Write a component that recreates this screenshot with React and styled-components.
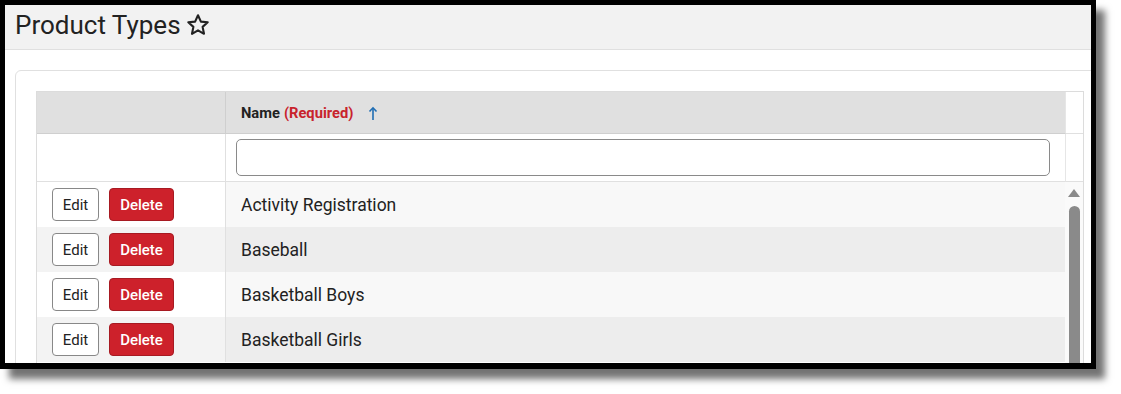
import React from 'react'
import styled, { createGlobalStyle } from 'styled-components'

const GlobalStyle = createGlobalStyle`
  body {
    margin: 0;
    background: #fff;
    font-family: Roboto, "Liberation Sans", sans-serif;
  }
`

const rows = ['Activity Registration', 'Baseball', 'Basketball Boys', 'Basketball Girls']

function Star() {
  return (
    <svg width="24" height="24" viewBox="0 0 24 24" fill="none" stroke="#222" strokeWidth="2.1" strokeLinejoin="round">
      <polygon points="12,2.3 14.9,8.6 21.7,9.3 16.6,13.9 18,20.8 12,17.3 6,20.8 7.4,13.9 2.3,9.3 9.1,8.6" />
    </svg>
  )
}

function SortArrow() {
  return (
    <svg width="10" height="14" viewBox="0 0 10 14" fill="none" stroke="#1f6db3" strokeWidth="1.6">
      <line x1="5" y1="2" x2="5" y2="14" />
      <polyline points="1.5,5.5 5,1.8 8.5,5.5" strokeLinejoin="miter" />
    </svg>
  )
}

function App() {
  return (
    <Stage>
      <GlobalStyle />
      <Frame>
        <Header>
          <Title>Product Types</Title>
          <Star />
        </Header>
        <Content>
          <Card>
            <Table>
              <HeadCell />
              <HeadCell $name>
                <b>Name</b>
                <Required>(Required)</Required>
                <SortArrow />
              </HeadCell>
              <Gutter />
              <FilterCell />
              <FilterCell $name>
                <FilterInput />
              </FilterCell>
              <Gutter />
              <Body>
                <Rows>
                  {rows.map((r, i) => (
                    <Row key={r} $even={i % 2 === 1}>
                      <Actions $even={i % 2 === 1}>
                        <EditButton>Edit</EditButton>
                        <DeleteButton>Delete</DeleteButton>
                      </Actions>
                      <NameCell>{r}</NameCell>
                    </Row>
                  ))}
                </Rows>
                <Scrollbar>
                  <UpArrow />
                  <Thumb />
                </Scrollbar>
              </Body>
            </Table>
          </Card>
        </Content>
      </Frame>
    </Stage>
  )
}

export default App

const Stage = styled.div`
  width: 1121px;
  height: 394px;
  overflow: hidden;
`

const Frame = styled.div`
  box-sizing: border-box;
  width: 1096px;
  height: 369px;
  border: 5px solid #000;
  border-bottom-width: 6px;
  background: #fff;
  overflow: hidden;
  box-shadow: 9px 10px 7px rgba(0, 0, 0, 0.55);
`

const Header = styled.div`
  height: 45px;
  background: #f2f2f2;
  border-bottom: 1px solid #e0e0e0;
  display: flex;
  align-items: center;
  gap: 5px;
  padding-left: 10px;
  padding-bottom: 5px;
  box-sizing: border-box;
`

const Title = styled.h1`
  margin: 0;
  font-size: 26px;
  font-weight: 400;
  color: #222;
`

const Content = styled.div`
  padding: 20px 0 0 10px;
`

const Card = styled.div`
  box-sizing: border-box;
  width: 1100px;
  border: 1px solid #e0e0e0;
  border-radius: 6px;
  padding: 20px;
  height: 320px;
`

const Table = styled.div`
  width: 1048px;
  box-sizing: border-box;
  border: 1px solid #dcdcdc;
  border-bottom: none;
  display: grid;
  grid-template-columns: 189px 840px 17px;
`

const HeadCell = styled.div`
  height: 41px;
  background: #e0e0e0;
  border-bottom: 1px solid #cfcfcf;
  border-right: ${p => (p.$name ? '1px solid #e6e6e6' : '1px solid #cfcfcf')};
  display: flex;
  align-items: center;
  padding-left: ${p => (p.$name ? '15px' : '0')};
  font-size: 14.7px;
  color: #222;
  gap: 4px;
  b { font-weight: 700; }
  svg { margin-left: 11px; }
`

const Required = styled.span`
  color: #c8232c;
  font-weight: 700;
`

const Gutter = styled.div`
  background: #fff;
  border-bottom: 1px solid #e0e0e0;
`

const FilterCell = styled.div`
  height: 48px;
  box-sizing: border-box;
  background: #fff;
  border-bottom: 1px solid #e0e0e0;
  border-right: ${p => (p.$name ? '1px solid #e6e6e6' : '1px solid #e0e0e0')};
  padding: 5px 15px 0 10px;
`

const FilterInput = styled.input`
  box-sizing: border-box;
  width: 814px;
  height: 37px;
  border: 1px solid #8a8a8a;
  border-radius: 5px;
  background: #fff;
`

const Body = styled.div`
  grid-column: 1 / 4;
  display: flex;
`

const Rows = styled.div`
  width: 1028px;
`

const Row = styled.div`
  display: grid;
  grid-template-columns: 189px 1fr;
  height: 45px;
  background: ${p => (p.$even ? '#ededed' : '#f8f8f8')};
`

const Actions = styled.div`
  background: ${p => (p.$even ? '#f3f3f3' : '#fff')};
  border-right: 1px solid #e0e0e0;
  display: flex;
  align-items: center;
  gap: 10px;
  padding-left: 15px;
`

const BaseButton = styled.button`
  height: 33px;
  box-sizing: border-box;
  border-radius: 4px;
  font-family: Roboto, "Liberation Sans", sans-serif;
  font-size: 15px;
  padding: 0;
`

const EditButton = styled(BaseButton)`
  width: 47px;
  background: #fff;
  border: 1px solid #888;
  color: #222;
`

const DeleteButton = styled(BaseButton)`
  width: 65px;
  background: #cd212b;
  border: 1px solid #a71a22;
  color: #fff;
  font-weight: 500;
`

const NameCell = styled.div`
  display: flex;
  align-items: center;
  padding-left: 15px;
  font-size: 17.5px;
  color: #222;
`

const Scrollbar = styled.div`
  width: 18px;
  background: #fafafa;
  display: flex;
  flex-direction: column;
  align-items: center;
  padding-top: 7px;
`

const UpArrow = styled.div`
  width: 0;
  height: 0;
  border-left: 6.5px solid transparent;
  border-right: 6.5px solid transparent;
  border-bottom: 8px solid #8a8a8a;
`

const Thumb = styled.div`
  margin-top: 9px;
  width: 11px;
  height: 180px;
  background: #8a8a8a;
  border-radius: 6px 6px 0 0;
`
